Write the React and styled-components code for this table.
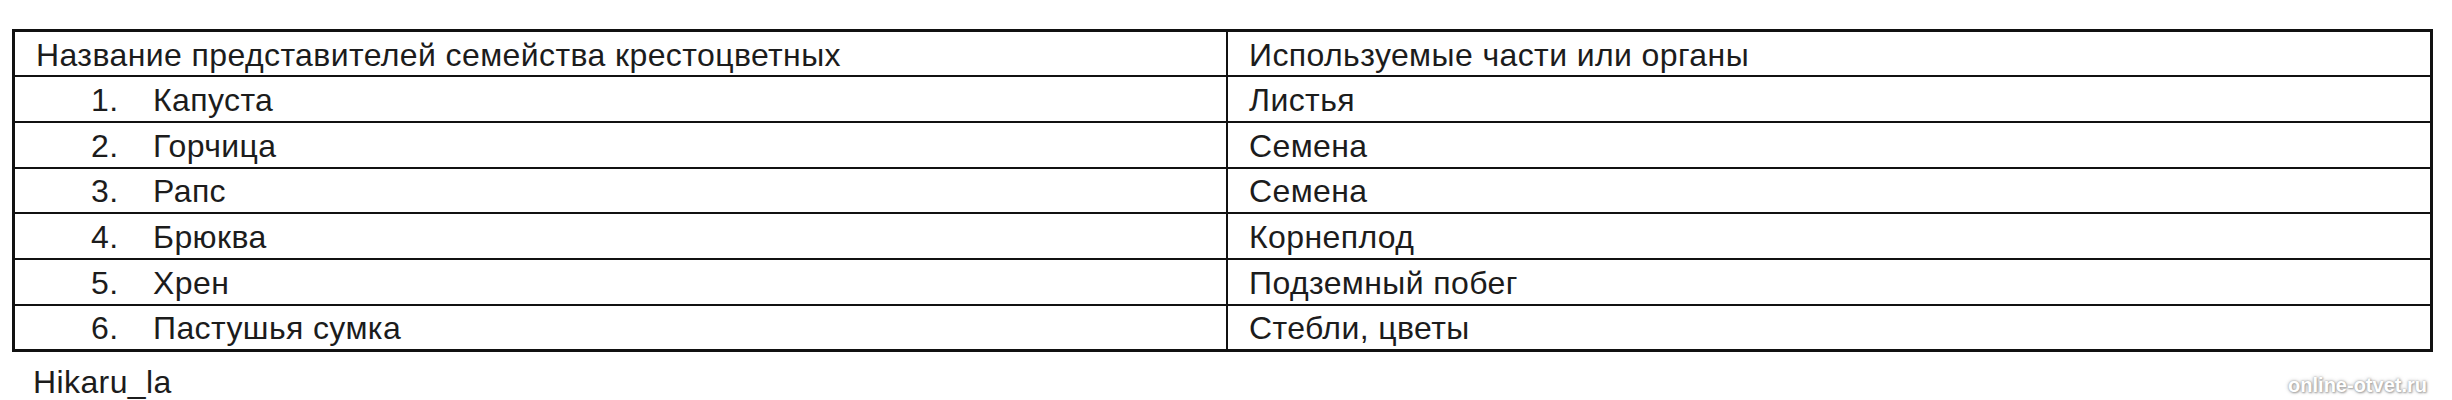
import React from 'react';
import styled, { createGlobalStyle } from 'styled-components';

const GlobalStyle = createGlobalStyle`
  html, body {
    margin: 0;
    padding: 0;
    background: #ffffff;
  }
  body {
    font-family: "Liberation Sans", Arial, sans-serif;
    color: #1c1c1c;
  }
`;

const Page = styled.div`
  width: 2452px;
  height: 400px;
  box-sizing: border-box;
  padding: 29px 19px 0 12px;
  overflow: hidden;
`;

const Table = styled.table`
  width: 100%;
  border-collapse: collapse;
  border: 3px solid #111;
  font-size: 32px;
  letter-spacing: 0.4px;
  line-height: 1;
`;

const Row = styled.tr`
  height: 45.7px;
`;

const Cell = styled.td`
  border: 2px solid #111;
  padding: 2px 0 0 21px;
  vertical-align: middle;
  white-space: nowrap;
  width: ${props => props.width || 'auto'};
`;

const Num = styled.span`
  display: inline-block;
  width: 62px;
  margin-left: 55px;
`;

const Footer = styled.div`
  display: flex;
  justify-content: space-between;
  align-items: flex-end;
  padding: 12px 6px 0 21px;
`;

const Author = styled.div`
  font-size: 32px;
  letter-spacing: 0.4px;
`;

const Watermark = styled.div`
  font-size: 20px;
  font-weight: 700;
  color: #ffffff;
  margin-bottom: 4px;
  text-shadow: 0 0 2px #9a9a9a, 0 0 4px #bdbdbd, 1px 1px 2px #a5a5a5;
`;

const rows = [
  ['Капуста', 'Листья'],
  ['Горчица', 'Семена'],
  ['Рапс', 'Семена'],
  ['Брюква', 'Корнеплод'],
  ['Хрен', 'Подземный побег'],
  ['Пастушья сумка', 'Стебли, цветы'],
];

const App = () => {
  return (
    <Page>
      <GlobalStyle />
      <Table>
        <tbody>
          <Row>
            <Cell width="1190px">Название представителей семейства крестоцветных</Cell>
            <Cell>Используемые части или органы</Cell>
          </Row>
          {rows.map(([name, part], i) => (
            <Row key={name}>
              <Cell>
                <Num>{i + 1}.</Num>
                {name}
              </Cell>
              <Cell>{part}</Cell>
            </Row>
          ))}
        </tbody>
      </Table>
      <Footer>
        <Author>Hikaru_la</Author>
        <Watermark>online-otvet.ru</Watermark>
      </Footer>
    </Page>
  );
};

export default App;
